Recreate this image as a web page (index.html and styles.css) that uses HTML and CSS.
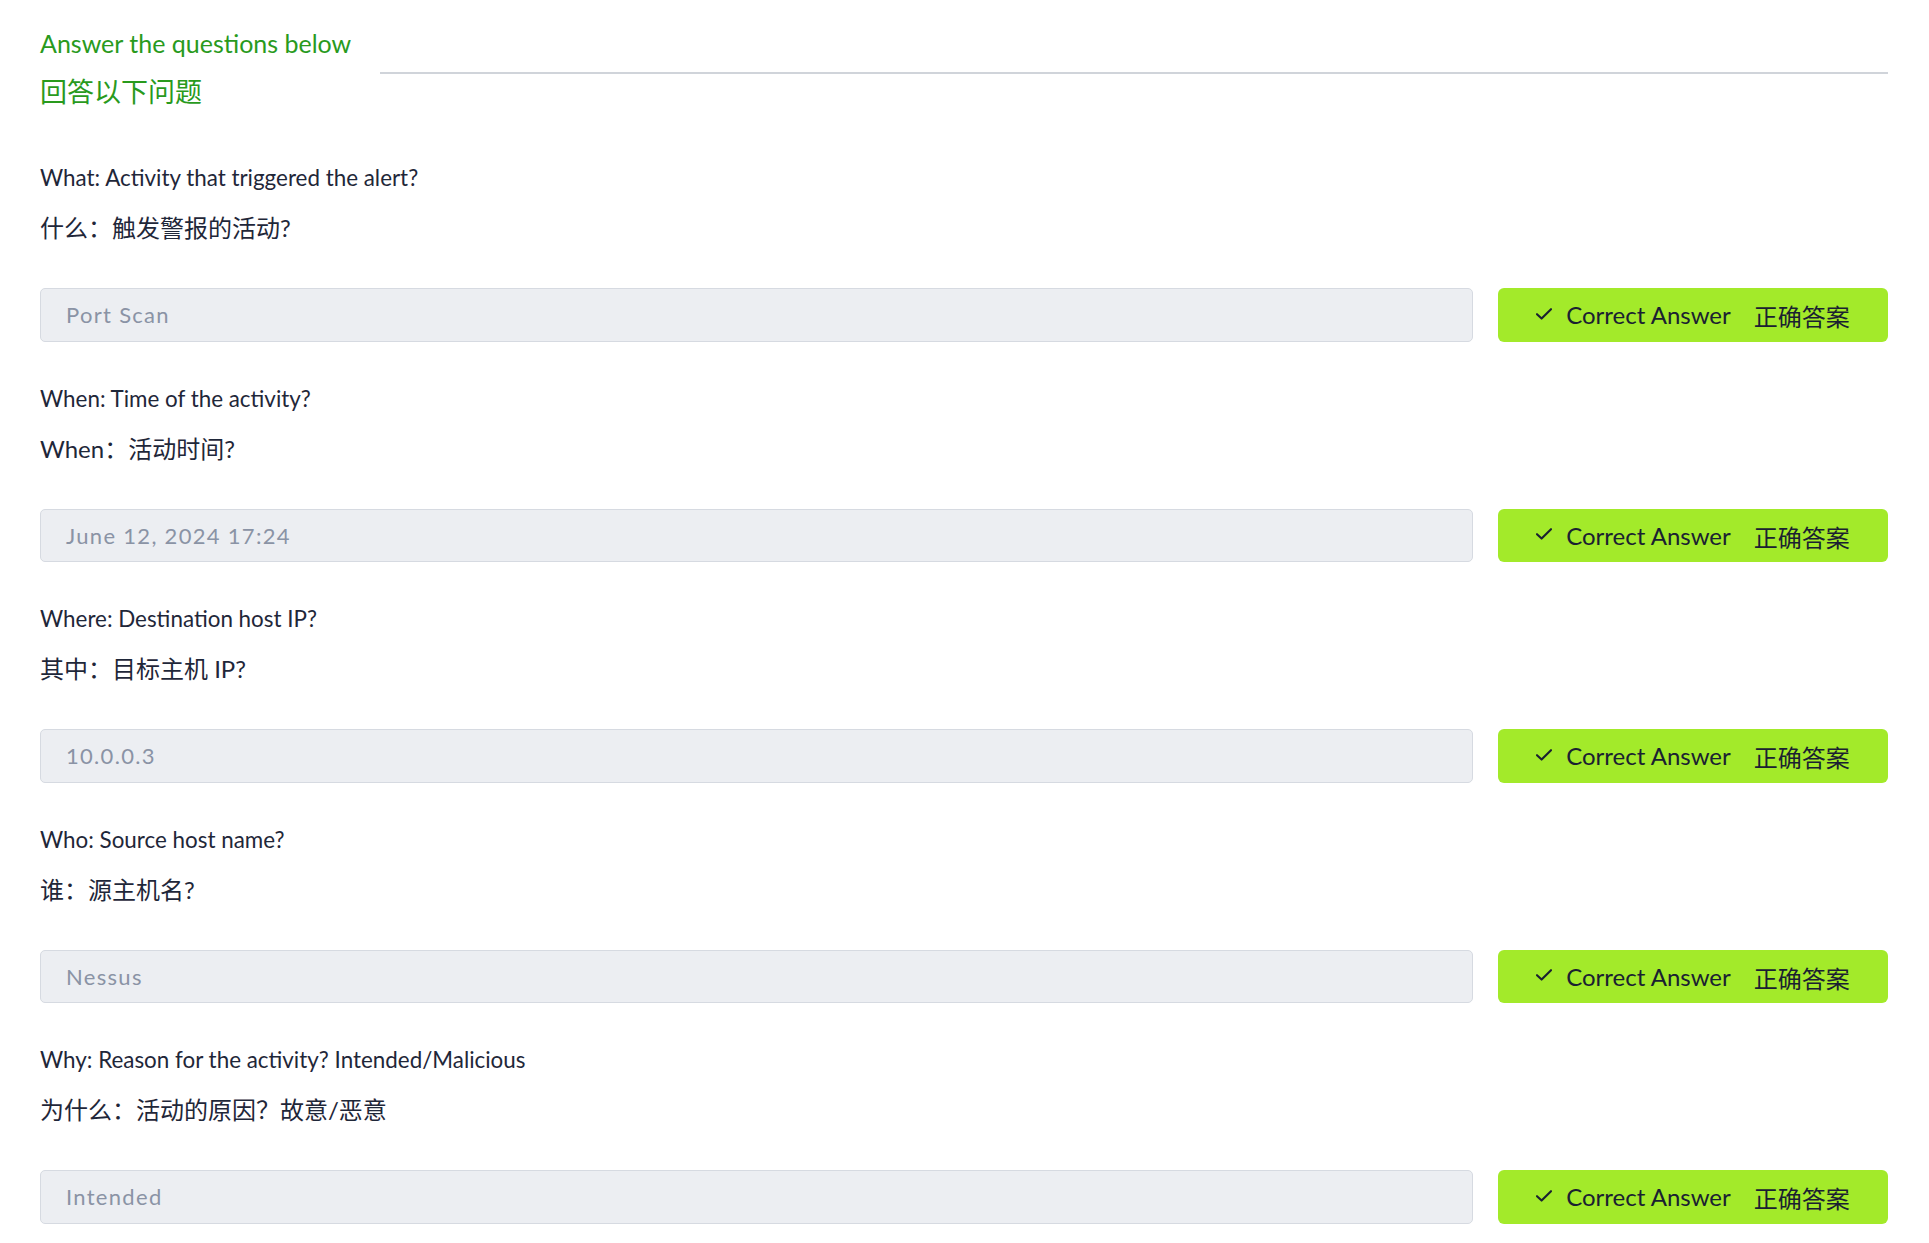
FILE: index.html
```html
<!DOCTYPE html>
<html lang="en">
<head>
<meta charset="utf-8">
<title>Answer the questions below</title>
<link rel="stylesheet" href="styles.css">
</head>
<body>
<main class="page">
  <header class="section-head">
    <div class="titles">
      <h2 class="title-en">Answer the questions below</h2>
      <h2 class="title-zh">回答以下问题</h2>
    </div>
    <div class="rule"></div>
  </header>

  <section class="question">
    <p class="q-en">What: Activity that triggered the alert?</p>
    <p class="q-zh">什么：触发警报的活动?</p>
    <div class="answer-row">
      <div class="answer-field">Port Scan</div>
      <button class="btn-correct" type="button">
        <svg class="check" viewBox="0 0 16 12" width="16" height="12"><path d="M1 6.2 L5.6 10.6 L15 1.2" fill="none" stroke="currentColor" stroke-width="2.1" stroke-linecap="round" stroke-linejoin="round"/></svg>
        <span class="btn-en">Correct Answer</span>
        <span class="btn-zh">正确答案</span>
      </button>
    </div>
  </section>

  <section class="question">
    <p class="q-en">When: Time of the activity?</p>
    <p class="q-zh">When：活动时间?</p>
    <div class="answer-row">
      <div class="answer-field">June 12, 2024 17:24</div>
      <button class="btn-correct" type="button">
        <svg class="check" viewBox="0 0 16 12" width="16" height="12"><path d="M1 6.2 L5.6 10.6 L15 1.2" fill="none" stroke="currentColor" stroke-width="2.1" stroke-linecap="round" stroke-linejoin="round"/></svg>
        <span class="btn-en">Correct Answer</span>
        <span class="btn-zh">正确答案</span>
      </button>
    </div>
  </section>

  <section class="question">
    <p class="q-en">Where: Destination host IP?</p>
    <p class="q-zh">其中：目标主机 IP?</p>
    <div class="answer-row">
      <div class="answer-field">10.0.0.3</div>
      <button class="btn-correct" type="button">
        <svg class="check" viewBox="0 0 16 12" width="16" height="12"><path d="M1 6.2 L5.6 10.6 L15 1.2" fill="none" stroke="currentColor" stroke-width="2.1" stroke-linecap="round" stroke-linejoin="round"/></svg>
        <span class="btn-en">Correct Answer</span>
        <span class="btn-zh">正确答案</span>
      </button>
    </div>
  </section>

  <section class="question">
    <p class="q-en">Who: Source host name?</p>
    <p class="q-zh">谁：源主机名?</p>
    <div class="answer-row">
      <div class="answer-field">Nessus</div>
      <button class="btn-correct" type="button">
        <svg class="check" viewBox="0 0 16 12" width="16" height="12"><path d="M1 6.2 L5.6 10.6 L15 1.2" fill="none" stroke="currentColor" stroke-width="2.1" stroke-linecap="round" stroke-linejoin="round"/></svg>
        <span class="btn-en">Correct Answer</span>
        <span class="btn-zh">正确答案</span>
      </button>
    </div>
  </section>

  <section class="question">
    <p class="q-en">Why: Reason for the activity? Intended/Malicious</p>
    <p class="q-zh">为什么：活动的原因？故意/恶意</p>
    <div class="answer-row">
      <div class="answer-field">Intended</div>
      <button class="btn-correct" type="button">
        <svg class="check" viewBox="0 0 16 12" width="16" height="12"><path d="M1 6.2 L5.6 10.6 L15 1.2" fill="none" stroke="currentColor" stroke-width="2.1" stroke-linecap="round" stroke-linejoin="round"/></svg>
        <span class="btn-en">Correct Answer</span>
        <span class="btn-zh">正确答案</span>
      </button>
    </div>
  </section>
</main>
</body>
</html>
```

FILE: styles.css
```css
* { box-sizing: border-box; }

html, body {
  margin: 0;
  padding: 0;
  background: #ffffff;
}

body {
  font-family: "Lato", "Noto Sans CJK SC", sans-serif;
  color: #1f2739;
}

.page {
  padding: 26px 41px 0 40px;
}

.section-head {
  display: flex;
  align-items: flex-start;
}

.titles {
  flex: 0 0 auto;
}

.title-en,
.title-zh {
  margin: 0;
  font-weight: 400;
  color: #299a1d;
  line-height: 34px;
}

.title-en {
  font-size: 25px;
}

.title-zh {
  font-size: 27px;
  margin-top: 15px;
}

.rule {
  flex: 1 1 auto;
  height: 2px;
  background: #d0d4da;
  margin-top: 46px;
  margin-left: 29px;
}

.question {
  margin-top: 41px;
}

.section-head + .question {
  margin-top: 53px;
}

.q-en,
.q-zh {
  margin: 0;
  line-height: 32px;
  font-size: 22.4px;
}

.q-zh {
  font-size: 24px;
  margin-top: 18px;
}

.answer-row {
  display: flex;
  align-items: stretch;
  gap: 25px;
  margin-top: 44px;
  height: 53.5px;
}

.answer-field {
  flex: 1 1 auto;
  display: flex;
  align-items: center;
  padding-left: 25px;
  background: #eceef2;
  border: 1px solid #d6dae1;
  border-radius: 5px;
  color: #8a93a5;
  font-size: 22px;
  letter-spacing: 1.3px;
}

.btn-correct {
  flex: 0 0 390px;
  display: flex;
  align-items: center;
  justify-content: center;
  border: 0;
  border-radius: 6px;
  background: #a3ea2a;
  color: #1a2131;
  font-family: "Lato", "Noto Sans CJK SC", sans-serif;
  font-size: 24px;
  padding: 0;
}

.check {
  margin-right: 14px;
  margin-top: -2px;
}

.btn-zh {
  margin-left: 23px;
  position: relative;
  top: 1px;
}
```
